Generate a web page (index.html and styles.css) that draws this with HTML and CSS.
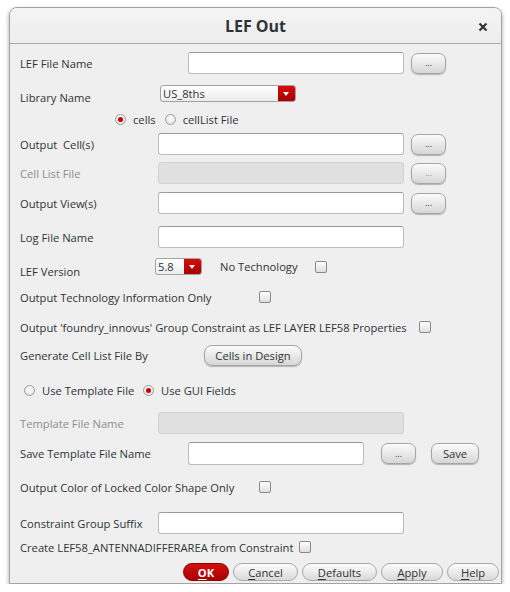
FILE: index.html
```html
<!DOCTYPE html>
<html>
<head>
<meta charset="utf-8">
<link rel="stylesheet" href="styles.css">
</head>
<body>
<div class="window">
  <div class="titlebar">
    <span class="title">LEF Out</span>
    <svg class="close" width="10" height="10" viewBox="0 0 10 10"><path d="M1.5 1.5 L8.5 8.5 M8.5 1.5 L1.5 8.5" stroke="#2e3436" stroke-width="2.2" stroke-linecap="butt"/></svg>
  </div>
  <div class="content">
    <div class="row r1">
      <span class="label w168">LEF File Name</span>
      <span class="input w216"></span>
      <span class="btn dots">...</span>
    </div>
    <div class="row r2">
      <span class="label w140 low">Library Name</span>
      <span class="combo w136"><span class="ctext">US_8ths</span><span class="carrow"></span></span>
    </div>
    <div class="row r3">
      <span class="radio on"></span><span class="rtext">cells</span>
      <span class="radio"></span><span class="rtext">cellList File</span>
    </div>
    <div class="row r4">
      <span class="label w138">Output&nbsp; Cell(s)</span>
      <span class="input w246"></span>
      <span class="btn dots">...</span>
    </div>
    <div class="row r5">
      <span class="label w138 dis">Cell List File</span>
      <span class="input w246 grey"></span>
      <span class="btn dots disb">...</span>
    </div>
    <div class="row r6">
      <span class="label w138">Output View(s)</span>
      <span class="input w246"></span>
      <span class="btn dots">...</span>
    </div>
    <div class="row r7">
      <span class="label w138">Log File Name</span>
      <span class="input w246"></span>
    </div>
    <div class="row r8">
      <span class="label w135 low">LEF Version</span>
      <span class="combo w47"><span class="ctext">5.8</span><span class="carrow"></span></span>
      <span class="label notech">No Technology</span>
      <span class="check"></span>
    </div>
    <div class="row r9">
      <span class="label w239">Output Technology Information Only</span>
      <span class="check"></span>
    </div>
    <div class="row r10">
      <span class="label w399">Output 'foundry_innovus' Group Constraint as LEF LAYER LEF58 Properties</span>
      <span class="check"></span>
    </div>
    <div class="row r11">
      <span class="label w182">Generate Cell List File By</span>
      <span class="btn design">Cells in Design</span>
    </div>
    <div class="row r12">
      <span class="radio"></span><span class="rtext w92">Use Template File</span>
      <span class="radio on"></span><span class="rtext">Use GUI Fields</span>
    </div>
    <div class="row r13">
      <span class="label w138 dis">Template File Name</span>
      <span class="input w246 grey"></span>
    </div>
    <div class="row r14">
      <span class="label w168">Save Template File Name</span>
      <span class="input w176"></span>
      <span class="btn dots gap17">...</span>
      <span class="btn save">Save</span>
    </div>
    <div class="row r15">
      <span class="label w239">Output Color of Locked Color Shape Only</span>
      <span class="check"></span>
    </div>
    <div class="row r16">
      <span class="label w138">Constraint Group Suffix</span>
      <span class="input w246"></span>
    </div>
    <div class="row r17">
      <span class="label w279">Create LEF58_ANTENNADIFFERAREA from Constraint</span>
      <span class="check"></span>
    </div>
    <div class="row r18">
      <span class="pill ok"><u>O</u>K</span>
      <span class="pill w65"><u>C</u>ancel</span>
      <span class="pill w75"><u>D</u>efaults</span>
      <span class="pill w62"><u>A</u>pply</span>
      <span class="pill w52"><u>H</u>elp</span>
    </div>
  </div>
</div>
</body>
</html>
```

FILE: styles.css
```css
* { box-sizing: border-box; }
html, body { margin: 0; padding: 0; background: #ffffff; }
body {
  font-family: "Open Sans", "Noto Sans", sans-serif;
  font-size: 11.2px;
  color: #2e3436;
}
.window {
  margin: 7px 0 0 9px;
  width: 493px;
  height: 577px;
  border: 1px solid #a3a3a3;
  border-radius: 8px 8px 0 0;
  background: #efefef;
  box-shadow: 0 2px 4px rgba(0,0,0,0.35);
  overflow: hidden;
}
.titlebar {
  height: 36px;
  border-bottom: 1px solid #a9a9a9;
  background: linear-gradient(#f4f4f4, #ededed);
  display: flex;
  align-items: center;
  justify-content: center;
  position: relative;
}
.title {
  font-size: 16px;
  font-weight: bold;
  color: #2e3436;
  margin-top: 1px;
}
.close {
  position: absolute;
  right: 13px;
  top: 14px;
}
.content { padding-left: 10px; }
.row { display: flex; align-items: center; white-space: nowrap; }
.label { flex: none; line-height: 15px; }
.dis { color: #8e8e8e; }
.low { align-self: flex-end; }
.w168 { width: 168px; }
.w140 { width: 140px; }
.w138 { width: 138px; }
.w135 { width: 135px; }
.w239 { width: 239px; }
.w399 { width: 399px; }
.w182 { width: 182px; }
.w279 { width: 279px; }
.w92 { width: 92px; }

.r1 { margin-top: 8px; height: 22px; }
.r2 { margin-top: 11px; height: 20px; align-items: flex-start; }
.r3 { margin-top: 7px; height: 14px; padding-left: 95px; }
.r4 { margin-top: 7px; height: 22px; }
.r5 { margin-top: 7px; height: 22px; }
.r6 { margin-top: 8px; height: 22px; }
.r7 { margin-top: 12px; height: 22px; }
.r8 { margin-top: 10px; height: 21px; align-items: flex-start; }
.r9 { margin-top: 10px; height: 16px; }
.r10 { margin-top: 14px; height: 16px; }
.r11 { margin-top: 10px; height: 21px; }
.r12 { margin-top: 16px; height: 16px; padding-left: 4px; }
.r13 { margin-top: 14px; height: 22px; }
.r14 { margin-top: 8px; height: 23px; }
.r15 { margin-top: 14px; height: 16px; }
.r16 { margin-top: 17px; height: 22px; }
.r17 { margin-top: 5px; height: 16px; }
.r18 { margin-top: 8px; height: 18px; padding-left: 163px; gap: 4px; }

.input {
  flex: none;
  height: 22px;
  background: #ffffff;
  border: 1px solid #bcbcbc;
  border-top-color: #9a9a9a;
  border-radius: 3px;
}
.r14 .input { height: 23px; }
.input.grey { background: #e0e0e0; border-color: #d2d2d2; }
.w216 { width: 216px; }
.w246 { width: 246px; }
.w176 { width: 176px; }

.btn {
  flex: none;
  display: flex;
  align-items: center;
  justify-content: center;
  border: 1px solid #a6a6a6;
  border-radius: 7px;
  background: linear-gradient(#fbfbfb, #e9e9e9 50%, #d6d6d6);
  box-shadow: 0 1px 1px rgba(0,0,0,0.25);
  color: #2e3436;
}
.dots {
  width: 35px;
  height: 21px;
  margin-left: 7px;
  font-size: 9px;
  padding-bottom: 1px;
}
.disb { color: #9a9a9a; }
.gap17 { margin-left: 17px; }
.save { width: 48px; height: 21px; margin-left: 15px; }
.design { width: 98px; height: 21px; margin-left: 2px; border-radius: 8px; }

.combo {
  flex: none;
  height: 17px;
  display: flex;
  border: 1px solid #a2a2a2;
  border-radius: 3px;
  background: linear-gradient(#ffffff, #ececec);
  overflow: hidden;
}
.w136 { width: 136px; }
.w47 { width: 47px; }
.ctext { flex: 1; padding-left: 2px; line-height: 15px; color: #2e3436; }
.carrow {
  width: 17px;
  background: linear-gradient(#d80c0c, #a60000);
  position: relative;
}
.carrow::after {
  content: "";
  position: absolute;
  left: 5px;
  top: 6px;
  border-left: 3.5px solid transparent;
  border-right: 3.5px solid transparent;
  border-top: 4px solid #ffffff;
}
.notech { margin-left: 18px; margin-top: 1px; width: 95px; }
.r8 .check { margin-top: 3px; }

.check {
  flex: none;
  width: 12px;
  height: 12px;
  border: 1px solid #8a8a8a;
  border-radius: 2px;
  background: linear-gradient(#ffffff, #dedede);
}

.radio {
  flex: none;
  width: 11px;
  height: 11px;
  border-radius: 50%;
  border: 1px solid #9c9c9c;
  background: radial-gradient(circle at 50% 35%, #ffffff, #dcdcdc);
  position: relative;
}
.radio.on::after {
  content: "";
  position: absolute;
  left: 2px;
  top: 2px;
  width: 5px;
  height: 5px;
  border-radius: 50%;
  background: #c80000;
}
.rtext { margin-left: 7px; margin-right: 9px; line-height: 15px; }

.pill {
  flex: none;
  height: 18px;
  display: flex;
  align-items: center;
  justify-content: center;
  border: 1px solid #a9a9a9;
  border-radius: 9px;
  background: linear-gradient(#fdfdfd, #ebebeb 50%, #d9d9d9);
  color: #2e3436;
}
.pill u { text-decoration-thickness: 1px; text-underline-offset: 2px; }
.ok {
  width: 46px;
  background: linear-gradient(#d41010, #a80000);
  border-color: #8a0000;
  color: #ffffff;
  font-weight: bold;
}
.w65 { width: 65px; }
.w75 { width: 75px; }
.w62 { width: 62px; }
.w52 { width: 52px; }
```
